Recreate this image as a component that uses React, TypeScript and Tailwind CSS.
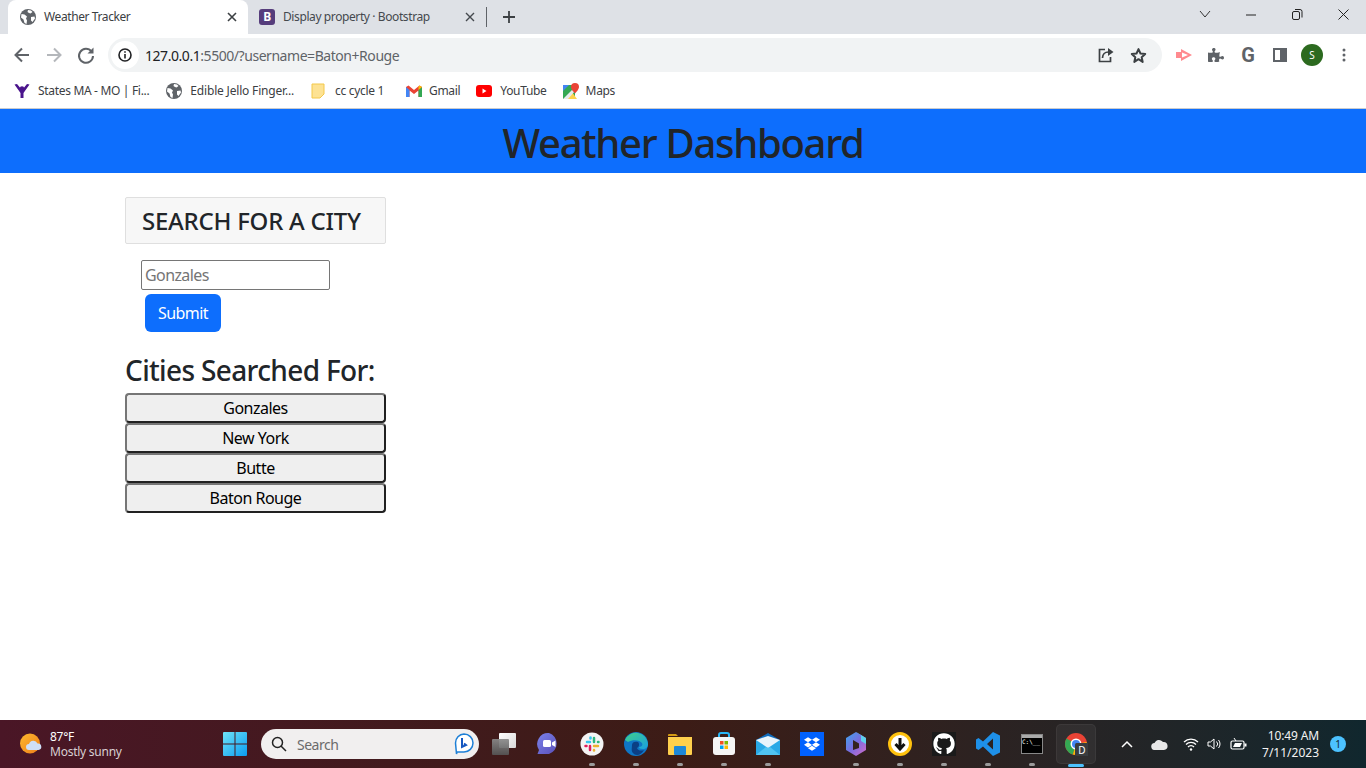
import { FaDropbox, FaGithub, FaPuzzlePiece } from "react-icons/fa";

const cities = ["Gonzales", "New York", "Butte", "Baton Rouge"];

function Globe({ size = 16 }: { size?: number }) {
  return (
    <svg width={size} height={size} viewBox="0 0 16 16" className="shrink-0">
      <circle cx="8" cy="8" r="8" fill="#5f6368" />
      <path d="M1.500 5l3 .5 2.500 2-1 2 1 2-.5 3.500-2-1-1-3.500-2.500-2zM8 1l3 .5 1.500 1.500-2 1.500-1.500-.5-1.500-1zM11 8l3.500-.5.5 2-2.500 3.500-1.500-1.500z" fill="#fff" />
    </svg>
  );
}

function Tabs() {
  return (
    <div className="h-[34px] bg-[#dee1e6] flex items-end pl-2 shrink-0 tracking-[-0.4px]">
      <div className="w-[240px] h-[34px] bg-white rounded-t-lg flex items-center pl-[12px] pr-[11px] text-[12px] text-[#3c4043]">
        <Globe />
        <span className="ml-[8px] flex-1">Weather Tracker</span>
        <svg width="10" height="10" viewBox="0 0 10 10"><path d="M1 1l8 8M9 1l-8 8" stroke="#3c4043" strokeWidth="1.6" /></svg>
      </div>
      <div className="w-[238px] h-[34px] flex items-center pl-[11px] pr-[11px] text-[12px] text-[#45494e]">
        <span className="w-4 h-4 rounded-[3px] bg-[#563d7c] text-white text-[12px] font-bold flex items-center justify-center shrink-0">B</span>
        <span className="ml-[8px] flex-1">Display property · Bootstrap</span>
        <svg width="10" height="10" viewBox="0 0 10 10"><path d="M1 1l8 8M9 1l-8 8" stroke="#45494e" strokeWidth="1.4" /></svg>
      </div>
      <div className="w-px h-[20px] bg-[#5f6368] mb-[7px]" />
      <div className="w-[44px] h-[34px] flex items-center justify-center">
        <svg width="12" height="12" viewBox="0 0 12 12"><path d="M6 0v12M0 6h12" stroke="#3c4043" strokeWidth="1.8" /></svg>
      </div>
      <div className="flex-1" />
      <div className="w-[46px] h-[34px] flex items-start justify-center pt-[10px]">
        <svg width="12" height="8" viewBox="0 0 12 8"><path d="M1 1l5 6 5-6" fill="none" stroke="#333" /></svg>
      </div>
      <div className="w-[46px] h-[34px] flex items-start justify-center pt-[14px]">
        <svg width="10" height="2" viewBox="0 0 10 2"><path d="M0 1h10" stroke="#222" /></svg>
      </div>
      <div className="w-[46px] h-[34px] flex items-start justify-center pt-[9px]">
        <svg width="11" height="11" viewBox="0 0 11 11"><rect x=".5" y="2.500" width="7" height="8" rx="1.500" fill="none" stroke="#222" /><path d="M3 .5h5a2 2 0 0 1 2 2v6" fill="none" stroke="#222" /></svg>
      </div>
      <div className="w-[46px] h-[34px] flex items-start justify-center pt-[9px]">
        <svg width="11" height="11" viewBox="0 0 11 11"><path d="M.5.5l10 10M10.500.5l-10 10" stroke="#222" /></svg>
      </div>
    </div>
  );
}

function ToolSlot({ children }: { children: React.ReactNode }) {
  return <span className="w-[32px] h-[32px] flex items-center justify-center shrink-0">{children}</span>;
}

function Toolbar() {
  return (
    <div className="h-[39px] bg-white flex items-start pt-[4px] pl-[12px] shrink-0">
      <svg className="mt-[7px]" width="20" height="20" viewBox="0 0 20 20"><path d="M17 10H4M10 3.500L3.500 10l6.500 6.500" fill="none" stroke="#5f6368" strokeWidth="2" /></svg>
      <svg className="mt-[7px] ml-[12px]" width="20" height="20" viewBox="0 0 20 20"><path d="M3 10h13M10 3.500l6.500 6.500-6.500 6.500" fill="none" stroke="#b4b7bb" strokeWidth="2" /></svg>
      <svg className="mt-[7px] ml-[12px]" width="20" height="20" viewBox="0 0 20 20"><path d="M15.500 6.500A7 7 0 1 0 17 11" fill="none" stroke="#5f6368" strokeWidth="2" /><path d="M17.500 2.500v6h-6z" fill="#5f6368" /></svg>
      <div className="ml-[12px] w-[1054px] h-[34px] bg-[#f1f3f4] rounded-full flex items-center pl-[3px] pr-[15px] shrink-0">
        <span className="w-[28px] h-[28px] bg-white rounded-full flex items-center justify-center">
          <svg width="14" height="14" viewBox="0 0 14 14"><circle cx="7" cy="7" r="6" fill="none" stroke="#202124" strokeWidth="1.600" /><path d="M7 6v4.500M7 3.200v1.600" stroke="#202124" strokeWidth="1.600" /></svg>
        </span>
        <span className="ml-[6px] text-[14px] text-[#5f6368] flex-1 tracking-[-0.45px]">
          <span className="text-[#202124]">127.0.0.1</span>:5500/?username=Baton+Rouge
        </span>
        <svg width="16" height="16" viewBox="0 0 16 16"><path d="M7 2.500H1.500v12h11V10" fill="none" stroke="#3c4043" strokeWidth="1.700" /><path d="M4.500 11c0-4 2.500-6 6-6" fill="none" stroke="#3c4043" strokeWidth="1.700" /><path d="M10 1l5.500 4-5.500 4z" fill="#3c4043" /></svg>
        <svg className="ml-[16px]" width="17" height="17" viewBox="0 0 24 24"><path d="M12 3l2.800 6.200 6.700.7-5 4.600 1.400 6.600L12 17.200l-5.900 3.900 1.400-6.600-5-4.600 6.700-.7z" fill="none" stroke="#3c4043" strokeWidth="2.800" strokeLinejoin="round" /></svg>
      </div>
      <div className="ml-[6px] flex items-center h-[34px]">
        <ToolSlot>
          <svg width="18" height="14" viewBox="0 0 18 14"><path d="M1 4h5V1l11 6-11 6v-3H1z" fill="#ff8a8f" /><path d="M7 4.500v5L13 7z" fill="#fff" /></svg>
        </ToolSlot>
        <ToolSlot><FaPuzzlePiece className="text-[#5f6368]" size={16} /></ToolSlot>
        <ToolSlot><span className="text-[#5f6368] font-bold text-[20px] leading-none font-['Roboto',sans-serif]">G</span></ToolSlot>
        <ToolSlot>
          <span className="w-[14px] h-[14px] border-[2px] border-[#5f6368] flex justify-end"><span className="w-[5px] h-full bg-[#5f6368]" /></span>
        </ToolSlot>
        <ToolSlot>
          <span className="w-[22px] h-[22px] rounded-full bg-[#2c6a1f] text-white text-[10px] flex items-center justify-center">S</span>
        </ToolSlot>
        <ToolSlot>
          <svg width="4" height="14" viewBox="0 0 4 14"><circle cx="2" cy="2" r="1.500" fill="#5f6368" /><circle cx="2" cy="7" r="1.500" fill="#5f6368" /><circle cx="2" cy="12" r="1.500" fill="#5f6368" /></svg>
        </ToolSlot>
      </div>
    </div>
  );
}

function Bookmarks() {
  return (
    <div className="h-[36px] bg-white border-b border-[#c9cbce] flex items-center pl-[14px] text-[12px] text-[#3c4043] tracking-[-0.32px] shrink-0">
      <svg width="16" height="16" viewBox="0 0 16 16"><circle cx="8" cy="5.500" r="2.200" fill="#4a148c" /><path d="M.5 1.500L3 1l5 6 5-6 2.500.5L9.500 10v5h-3v-5z" fill="#4a148c" /></svg>
      <span className="ml-[8px]">States MA - MO | Fi...</span>
      <span className="ml-[17px]"><Globe size={16} /></span>
      <span className="ml-[8px] tracking-[-0.18px]">Edible Jello Finger...</span>
      <svg className="ml-[17px]" width="14" height="16" viewBox="0 0 14 16"><path d="M1 1h12v10l-4 4H1z" fill="#fde293" stroke="#f3c84b" /></svg>
      <span className="ml-[10px]">cc cycle 1</span>
      <svg className="ml-[22px]" width="16" height="12" viewBox="0 0 16 12"><path d="M0 2v10h3.500V5.500L8 9l4.500-3.500V12H16V2L13.500.5 8 5 2.500.5z" fill="#ea4335" /><path d="M0 2v10h3.500V5z" fill="#4285f4" /><path d="M12.500 5v7H16V2z" fill="#34a853" /><path d="M13.500.5L16 2l-3.500 3V1.500z" fill="#fbbc04" /></svg>
      <span className="ml-[7px]">Gmail</span>
      <svg className="ml-[16px]" width="16" height="12" viewBox="0 0 16 12"><rect width="16" height="12" rx="3" fill="#f00" /><path d="M6.500 3.500l4 2.500-4 2.500z" fill="#fff" /></svg>
      <span className="ml-[8px]">YouTube</span>
      <svg className="ml-[16px]" width="16" height="16" viewBox="0 0 16 16"><path d="M0 2h12v14H0z" fill="#34a853" /><path d="M3 16l6-7 5 7z" fill="#fcd34d" /><path d="M0 2h6L0 8z" fill="#4285f4" /><path d="M0 16l9-9 3 1-7 8z" fill="#e8eaed" /><path d="M12 0a4 4 0 0 1 4 4c0 2.500-4 6.500-4 6.500S8 6.500 8 4a4 4 0 0 1 4-4z" fill="#ea4335" /></svg>
      <span className="ml-[7px]">Maps</span>
    </div>
  );
}

function Page() {
  return (
    <div className="flex-1 bg-white text-[#212529]">
      <div className="h-[64px] bg-[#0d6efd] flex items-center justify-center pt-[4px]">
        <h1 className="text-[40px] font-medium leading-[1.2] tracking-[-1.3px]">Weather Dashboard</h1>
      </div>
      <div className="ml-[125px] w-[261px] mt-[24px]">
        <div className="h-[47px] bg-[#f7f7f7] border border-[#dfdfdf] rounded-[2px] flex items-center pl-[16px] text-[24px] font-medium tracking-[-0.25px]">
          SEARCH FOR A CITY
        </div>
        <input
          placeholder="Gonzales"
          className="block ml-[16px] mt-[16px] w-[189px] h-[30px] bg-white border border-[#767676] rounded-[2px] px-[3px] text-[16px] tracking-[-0.6px] placeholder:text-[#757575]"
        />
        <button className="block ml-[20px] mt-[4px] w-[76px] h-[38px] bg-[#0d6efd] rounded-[6px] text-white text-[16px] tracking-[-0.6px]">Submit</button>
        <h2 className="mt-[21px] text-[28px] font-medium leading-[34px] tracking-[-0.65px] whitespace-nowrap">Cities Searched For:</h2>
        <div className="mt-[6px] flex flex-col">
          {cities.map((c) => (
            <button
              key={c}
              className="h-[30px] w-full bg-[#efefef] border-2 border-t-[#767676] border-l-[#767676] border-r-[#212121] border-b-[#212121] rounded-[4px] text-[16px] text-black leading-none tracking-[-0.5px]"
            >
              {c}
            </button>
          ))}
        </div>
      </div>
    </div>
  );
}

function TaskIcon({ children, dot, active }: { children: React.ReactNode; dot?: boolean; active?: boolean }) {
  return (
    <div className="relative w-[44px] h-[48px] flex items-center justify-center">
      {active && <span className="absolute left-[2px] top-[4px] w-[40px] h-[40px] rounded-[5px] bg-white/5 border border-white/5" />}
      <span className="relative flex">{children}</span>
      {dot && <span className={active ? "absolute bottom-[1px] left-[14px] w-[16px] h-[3px] rounded-full bg-[#4cc2ff]" : "absolute bottom-[2px] left-[19px] w-[6px] h-[3px] rounded-full bg-[#9b9b9b]"} />}
    </div>
  );
}

function Taskbar() {
  return (
    <div className="h-[48px] shrink-0 flex items-center bg-gradient-to-r from-[#4a1626] via-[#3c1c16] to-[#10272e] text-white">
      <div className="w-[223px] flex items-center pl-[20px] shrink-0">
        <svg width="22" height="22" viewBox="0 0 22 22">
          <defs><linearGradient id="sun" x1="0" y1="0" x2="1" y2="1"><stop offset="0" stopColor="#fdb92e" /><stop offset="1" stopColor="#ee7f1b" /></linearGradient></defs>
          <circle cx="10" cy="10.500" r="10" fill="url(#sun)" />
          <path d="M9 17a3 3 0 0 1 0-6 4.500 4.500 0 0 1 8.500-.5A3.200 3.200 0 0 1 18.500 17z" fill="#cfe0f7" />
        </svg>
        <div className="ml-[8px] text-[12px] leading-[15px] tracking-[-0.25px]">
          <div>87°F</div>
          <div className="text-[#d8cfd2]">Mostly sunny</div>
        </div>
      </div>
      <svg width="24" height="24" viewBox="0 0 24 24" className="shrink-0">
        <defs><linearGradient id="win" x1="0" y1="0" x2="1" y2="1"><stop offset="0" stopColor="#6fe3f7" /><stop offset="1" stopColor="#0a9cf0" /></linearGradient></defs>
        <path d="M0 1a1 1 0 0 1 1-1h10.500v11.500H0zM12.500 0H23a1 1 0 0 1 1 1v10.500H12.500zM0 12.500h11.500V24H1a1 1 0 0 1-1-1zM12.500 12.500H24V23a1 1 0 0 1-1 1H12.500z" fill="url(#win)" />
      </svg>
      <div className="ml-[14px] w-[218px] h-[30px] rounded-full bg-[#f1efef] flex items-center pl-[10px] pr-[5px] text-[#6b6b6b] text-[14px] tracking-[-0.5px] shrink-0">
        <svg width="16" height="16" viewBox="0 0 16 16"><circle cx="6.500" cy="6.500" r="5" fill="none" stroke="#222" strokeWidth="1.500" /><path d="M10 10l5 5" stroke="#222" strokeWidth="1.500" /></svg>
        <span className="ml-[10px] flex-1">Search</span>
        <svg width="20" height="22" viewBox="0 0 20 22"><path d="M10 1a9 9 0 0 1 0 18H3l-.5 2L1.500 10A9 9 0 0 1 10 1z" fill="#fff" stroke="#1d7fd6" strokeWidth="1.500" /><path d="M8 5v9l4-2-2-1.500" fill="none" stroke="#1557c0" strokeWidth="2" /></svg>
      </div>
      <div className="ml-[3px] flex items-center shrink-0">
        <TaskIcon>
          <svg width="24" height="22" viewBox="0 0 24 22">
            <defs><linearGradient id="wa" x1="0" y1="0" x2="1" y2="1"><stop offset="0" stopColor="#fff" /><stop offset="1" stopColor="#d8d8d8" /></linearGradient><linearGradient id="wb" x1="0" y1="0" x2="0" y2="1"><stop offset="0" stopColor="#8a8a8a" /><stop offset="1" stopColor="#555" /></linearGradient></defs>
            <rect x="7" y="0" width="17" height="15" rx="1" fill="url(#wa)" />
            <rect x="0" y="6" width="17" height="16" rx="1" fill="url(#wb)" fillOpacity=".92" />
          </svg>
        </TaskIcon>
        <TaskIcon>
          <svg width="24" height="24" viewBox="0 0 24 24">
            <defs><linearGradient id="tm" x1="0" y1="0" x2="1" y2="1"><stop offset="0" stopColor="#7b83eb" /><stop offset="1" stopColor="#5a4fb8" /></linearGradient></defs>
            <path d="M13 1a11 11 0 0 1 0 21H1.500l1.500-4A11 11 0 0 1 13 1z" fill="url(#tm)" />
            <rect x="7" y="8" width="8" height="7" rx="1.500" fill="#fff" />
            <path d="M16 10.500l3.500-2v6.500L16 13z" fill="#fff" />
          </svg>
        </TaskIcon>
        <TaskIcon dot>
          <svg width="24" height="24" viewBox="0 0 24 24"><circle cx="12" cy="12" r="11.500" fill="#f4f4f4" /><path d="M7 10h3" stroke="#36c5f0" strokeWidth="2.500" strokeLinecap="round" /><path d="M10.500 5.500v1" stroke="#36c5f0" strokeWidth="2.500" strokeLinecap="round" /><path d="M14 6v4" stroke="#2eb67d" strokeWidth="2.500" strokeLinecap="round" /><path d="M18 10h.5" stroke="#2eb67d" strokeWidth="2.500" strokeLinecap="round" /><path d="M14 14h4" stroke="#ecb22e" strokeWidth="2.500" strokeLinecap="round" /><path d="M14 18v.5" stroke="#ecb22e" strokeWidth="2.500" strokeLinecap="round" /><path d="M10 14v4" stroke="#e01e5a" strokeWidth="2.500" strokeLinecap="round" /><path d="M5.500 14h1" stroke="#e01e5a" strokeWidth="2.500" strokeLinecap="round" /></svg>
        </TaskIcon>
        <TaskIcon dot>
          <svg width="24" height="24" viewBox="0 0 24 24"><defs><linearGradient id="edge" x1="0" y1="0" x2="1" y2="1"><stop offset="0" stopColor="#3fd08a" /><stop offset="1" stopColor="#1a9ee0" /></linearGradient></defs><circle cx="12" cy="12" r="12" fill="#0f76c6" /><path d="M1 8A12 12 0 0 1 24 12c0 3-2 5-5 5s-4-1-4-2c3 0 4-2 3-4-2-3-9-4-14-1z" fill="url(#edge)" /><path d="M8 13c0-3 3-4 6-3 2 2 1 5-1 6 1 3 5 3 7 2-3 6-9 6-11 3-2-2-1-5-1-8z" fill="#0b3f85" /></svg>
        </TaskIcon>
        <TaskIcon dot>
          <svg width="24" height="22" viewBox="0 0 24 22"><path d="M0 2a1 1 0 0 1 1-1h7l2 2h-10z" fill="#d49a14" /><path d="M0 4h24v17a1 1 0 0 1-1 1H1a1 1 0 0 1-1-1z" fill="#ffd04d" /><rect x="6" y="13" width="12" height="9" rx="1" fill="#1e88d8" /></svg>
        </TaskIcon>
        <TaskIcon dot>
          <svg width="24" height="24" viewBox="0 0 24 24"><path d="M7 6V3a2 2 0 0 1 2-2h6a2 2 0 0 1 2 2v3" fill="none" stroke="#29b6f6" strokeWidth="2" /><rect x="1" y="5" width="22" height="18" rx="3" fill="#f5f5f5" /><rect x="8" y="9" width="3.500" height="3.500" fill="#f25022" /><rect x="12.500" y="9" width="3.500" height="3.500" fill="#7fba00" /><rect x="8" y="13.500" width="3.500" height="3.500" fill="#00a4ef" /><rect x="12.500" y="13.500" width="3.500" height="3.500" fill="#ffb900" /></svg>
        </TaskIcon>
        <TaskIcon dot>
          <svg width="24" height="22" viewBox="0 0 24 22"><path d="M0 7l12-7 12 7v15H0z" fill="#0f6cbd" /><path d="M0 7h24v15H0z" fill="#29a9e6" /><path d="M0 7l12 8 12-8-12-4z" fill="#e8f4fb" /><path d="M0 22l10-8 2 1 2-1 10 8z" fill="#50c4f2" /></svg>
        </TaskIcon>
        <TaskIcon>
          <span className="w-[24px] h-[24px] bg-[#0061fe] flex items-center justify-center"><FaDropbox size={16} color="#fff" /></span>
        </TaskIcon>
        <TaskIcon dot>
          <svg width="22" height="24" viewBox="0 0 22 24">
            <defs><linearGradient id="cp" x1="0" y1="0" x2="1" y2="1"><stop offset="0" stopColor="#3aa8ee" /><stop offset=".5" stopColor="#7a6be0" /><stop offset="1" stopColor="#d56cc8" /></linearGradient></defs>
            <path d="M11 0l10 6v12l-10 6-10-6V6z" fill="url(#cp)" />
            <path d="M11 0l10 6v6l-5-3V3.500z" fill="#5fd0ec" />
            <path d="M8 8l6 3.500V16l-6 2z" fill="#33231f" />
          </svg>
        </TaskIcon>
        <TaskIcon dot>
          <svg width="24" height="24" viewBox="0 0 24 24"><circle cx="12" cy="12" r="10.500" fill="#fff" stroke="#ffc20e" strokeWidth="3" /><path d="M12 6v10M7.500 12l4.500 5 4.500-5" fill="none" stroke="#111" strokeWidth="3" /></svg>
        </TaskIcon>
        <TaskIcon dot>
          <span className="w-[24px] h-[24px] bg-[#1a1a1a] flex items-center justify-center"><FaGithub size={22} color="#fff" /></span>
        </TaskIcon>
        <TaskIcon dot>
          <svg width="24" height="24" viewBox="0 0 24 24"><path d="M17 0l7 3.500v17L17 24 7 14.500 2.500 18 0 16.500V7.500L2.500 6 7 9.500zM17 6.500l-6 5.500 6 5.500z" fill="#1e90e8" /></svg>
        </TaskIcon>
        <TaskIcon dot>
          <span className="w-[22px] h-[20px] border border-[#888] bg-black flex flex-col">
            <span className="h-[3px] bg-[#aaa]" />
            <span className="text-[6px] leading-[8px] text-white font-['DejaVu_Sans_Mono',monospace]">C:\__</span>
          </span>
        </TaskIcon>
        <TaskIcon dot active>
          <svg width="24" height="24" viewBox="0 0 24 24"><circle cx="12" cy="12" r="11" fill="#ea4335" /><path d="M12 12L2.500 6.500A11 11 0 0 0 9 22.600z" fill="#34a853" /><path d="M12 12l10.500-2A11 11 0 0 1 9 22.600z" fill="#fbbc04" /><circle cx="12" cy="12" r="5.500" fill="#fff" /><circle cx="12" cy="12" r="4" fill="#4285f4" /><rect x="11" y="11" width="14" height="13" rx="1.500" fill="#3a3d40" /><text x="18" y="21.500" fontSize="10" fill="#fff" textAnchor="middle">D</text></svg>
        </TaskIcon>
      </div>
      <div className="flex-1" />
      <div className="flex items-center shrink-0">
        <svg width="12" height="8" viewBox="0 0 12 8"><path d="M1 7l5-5 5 5" fill="none" stroke="#fff" strokeWidth="1.500" /></svg>
        <svg className="ml-[18px]" width="17" height="11" viewBox="0 0 17 11"><path d="M4 11a3.500 3.500 0 0 1-.5-7A5 5 0 0 1 12 3a4 4 0 0 1 1 8z" fill="#e8e8e8" /></svg>
        <svg className="ml-[15px]" width="16" height="14" viewBox="0 0 16 14"><path d="M1 5a10 10 0 0 1 14 0M3 7.500a7 7 0 0 1 10 0M5 10a4 4 0 0 1 6 0" fill="none" stroke="#fff" strokeWidth="1.300" /><circle cx="8" cy="12.500" r="1.200" fill="#fff" /></svg>
        <svg className="ml-[8px]" width="16" height="14" viewBox="0 0 16 14"><path d="M1 5h2.500L7 2v10L3.500 9H1z" fill="none" stroke="#fff" /><path d="M9.500 4.500a3.500 3.500 0 0 1 0 5M11.500 3a6 6 0 0 1 0 8" fill="none" stroke="#fff" /></svg>
        <svg className="ml-[7px]" width="17" height="14" viewBox="0 0 17 14"><rect x="1" y="4" width="13" height="8" rx="1.500" fill="none" stroke="#fff" strokeWidth="1.200" /><rect x="14.500" y="6.500" width="2" height="3" fill="#fff" /><path d="M3 10l2-4h7l-2 4z" fill="#fff" /><path d="M4 1l2 3" stroke="#fff" /></svg>
        <div className="ml-[6px] w-[76px] pr-[10px] text-right text-[12px] leading-[17px] text-[#f3f3f3]">
          <div className="tracking-[-0.15px]">10:49 AM</div>
          <div>7/11/2023</div>
        </div>
        <span className="ml-[1px] mr-[20px] w-[16px] h-[16px] rounded-full bg-[#4cc2ff] text-[#10272e] text-[10px] flex items-center justify-center">1</span>
      </div>
    </div>
  );
}

export default function App() {
  return (
    <div className="h-screen flex flex-col overflow-hidden font-['Noto_Sans',sans-serif]">
      <Tabs />
      <Toolbar />
      <Bookmarks />
      <Page />
      <Taskbar />
    </div>
  );
}
